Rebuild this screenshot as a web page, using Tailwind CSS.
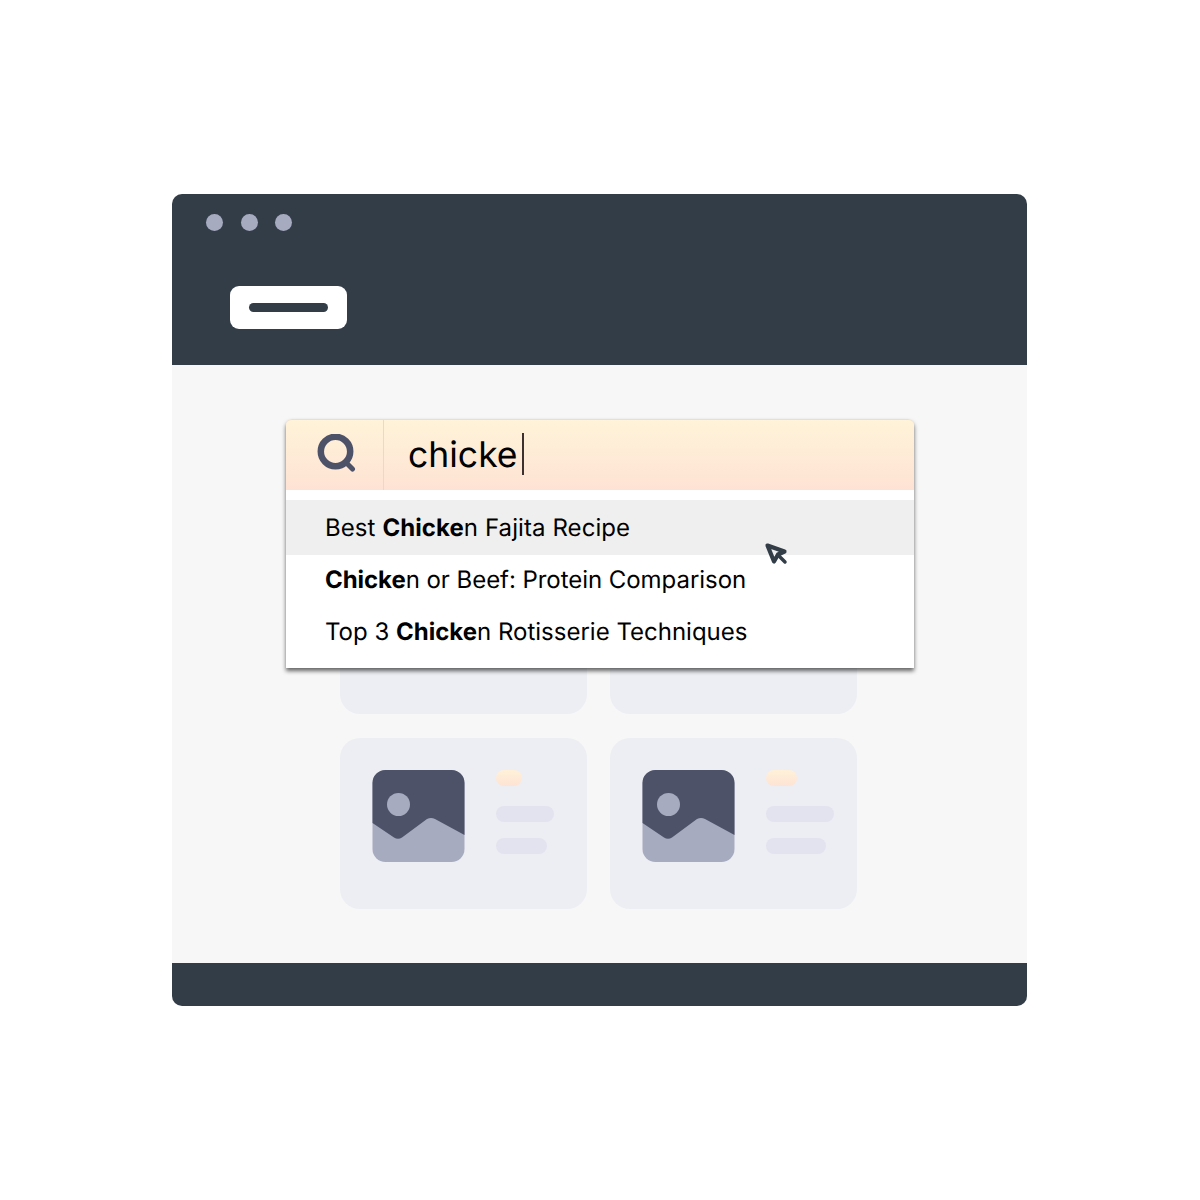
<!DOCTYPE html>
<html lang="en">
<head>
  <meta charset="UTF-8">
  <title>Search suggestions</title>
  <script src="https://cdn.jsdelivr.net/npm/@tailwindcss/browser@4"></script>
</head>
<body class="bg-white font-['Inter',sans-serif] [text-rendering:geometricPrecision]">
  <div class="pt-[194px] pl-[172px] h-[1200px]">
    <div class="w-[855px] h-[812px] flex flex-col rounded-[10px] overflow-hidden bg-[#f7f7f7] relative">

      <!-- header -->
      <div class="h-[171px] bg-[#323d48] pt-[20px]">
        <div class="flex gap-[17.5px] pl-[34px]">
          <span class="w-[17px] h-[17px] rounded-full bg-[#a7abc0]"></span>
          <span class="w-[17px] h-[17px] rounded-full bg-[#a7abc0]"></span>
          <span class="w-[17px] h-[17px] rounded-full bg-[#a7abc0]"></span>
        </div>
        <div class="mt-[55px] ml-[58px] w-[117px] h-[43px] rounded-[9px] bg-white flex items-center justify-center">
          <span class="w-[79px] h-[9px] rounded-full bg-[#323d48]"></span>
        </div>
      </div>

      <!-- cards -->
      <div class="flex-1 pt-[178px] pl-[168px]">
        <div class="grid grid-cols-[247px_247px] gap-x-[23px] gap-y-[24px]">
          <div class="h-[171px] rounded-[20px] bg-[#edeef3]"></div>
          <div class="h-[171px] rounded-[20px] bg-[#edeef3]"></div>

          <div class="h-[171px] rounded-[20px] bg-[#edeef3] flex gap-[31px] pt-[32px] pl-[32px]">
            <svg class="w-[93px] h-[92px]" viewBox="0 0 93 92">
              <rect x="0.500" width="92" height="92" rx="13" fill="#a7abc0"/>
              <path d="M0.500 53V13A13 13 0 0 1 13.500 0H79.500A13 13 0 0 1 92.500 13V65L63 49Q59 47 55 49L30 67.500Q26 70 22 67.500Z" fill="#4d5268"/>
              <circle cx="26.500" cy="34.500" r="11.500" fill="#a7abc0"/>
            </svg>
            <div class="flex flex-col">
              <span class="w-[26px] h-[16px] rounded-full bg-gradient-to-b from-[#fff1d9] to-[#fee3d4]"></span>
              <span class="mt-[20px] w-[58px] h-[16px] rounded-full bg-[#e2e3ee]"></span>
              <span class="mt-[16px] w-[51px] h-[16px] rounded-full bg-[#e2e3ee]"></span>
            </div>
          </div>

          <div class="h-[171px] rounded-[20px] bg-[#edeef3] flex gap-[31px] pt-[32px] pl-[32px]">
            <svg class="w-[93px] h-[92px]" viewBox="0 0 93 92">
              <rect x="0.500" width="92" height="92" rx="13" fill="#a7abc0"/>
              <path d="M0.500 53V13A13 13 0 0 1 13.500 0H79.500A13 13 0 0 1 92.500 13V65L63 49Q59 47 55 49L30 67.500Q26 70 22 67.500Z" fill="#4d5268"/>
              <circle cx="26.500" cy="34.500" r="11.500" fill="#a7abc0"/>
            </svg>
            <div class="flex flex-col">
              <span class="w-[31px] h-[16px] rounded-full bg-gradient-to-b from-[#fff1d9] to-[#fee3d4]"></span>
              <span class="mt-[20px] w-[68px] h-[16px] rounded-full bg-[#e2e3ee]"></span>
              <span class="mt-[16px] w-[60px] h-[16px] rounded-full bg-[#e2e3ee]"></span>
            </div>
          </div>
        </div>
      </div>

      <!-- footer -->
      <div class="h-[43px] bg-[#323d48]"></div>

      <!-- search box with suggestions -->
      <div class="absolute left-[114px] top-[224.5px] w-[628px] rounded-t-[6px] bg-white shadow-[0_3px_4px_rgba(0,0,0,0.6)]">
        <div class="h-[71.5px] flex rounded-t-[6px] border-t border-[#ecdfc4] bg-gradient-to-b from-[#fff3d9] to-[#fee3d4]">
          <div class="w-[98px] border-r border-[#ecd9c4] flex items-center justify-center">
            <svg class="w-[42px] h-[42px]" viewBox="0 0 42 42" fill="none" stroke="#4d5268" stroke-linecap="round">
              <circle cx="21.500" cy="17.500" r="14.700" stroke-width="6.500"/>
              <path d="M31.500 28L38.500 35" stroke-width="5"/>
            </svg>
          </div>
          <div class="flex items-center pl-[24px] text-[35.5px] text-black leading-none pb-[1px]">
            <span>chicke</span><span class="ml-[4px] w-[2px] h-[42px] bg-[#3c3030]"></span>
          </div>
        </div>
        <div class="pt-[10px] pb-[10px] text-[24px] text-black">
          <div class="h-[55px] pl-[39px] flex items-center bg-[#efefef]"><p class="tracking-[0.08px]">Best <b>Chicke</b>n Fajita Recipe</p></div>
          <div class="h-[50px] pl-[39px] flex items-center"><p class="tracking-[-0.05px]"><b>Chicke</b>n or Beef: Protein Comparison</p></div>
          <div class="h-[53px] pl-[39px] flex items-center"><p>Top 3 <b>Chicke</b>n Rotisserie Techniques</p></div>
        </div>
      </div>

      <!-- mouse pointer -->
      <svg class="absolute left-[592px] top-[348px] w-[26px] h-[26px]" viewBox="0 0 26 26" fill="none" stroke="#323d48" stroke-linejoin="round" stroke-linecap="round">
        <path d="M3.500 3.500L20.500 9.500L14 12.500L10 19.500Z" stroke-width="4.200"/>
        <path d="M14 13L21 20" stroke-width="3.500"/>
      </svg>
    </div>
  </div>
</body>
</html>
